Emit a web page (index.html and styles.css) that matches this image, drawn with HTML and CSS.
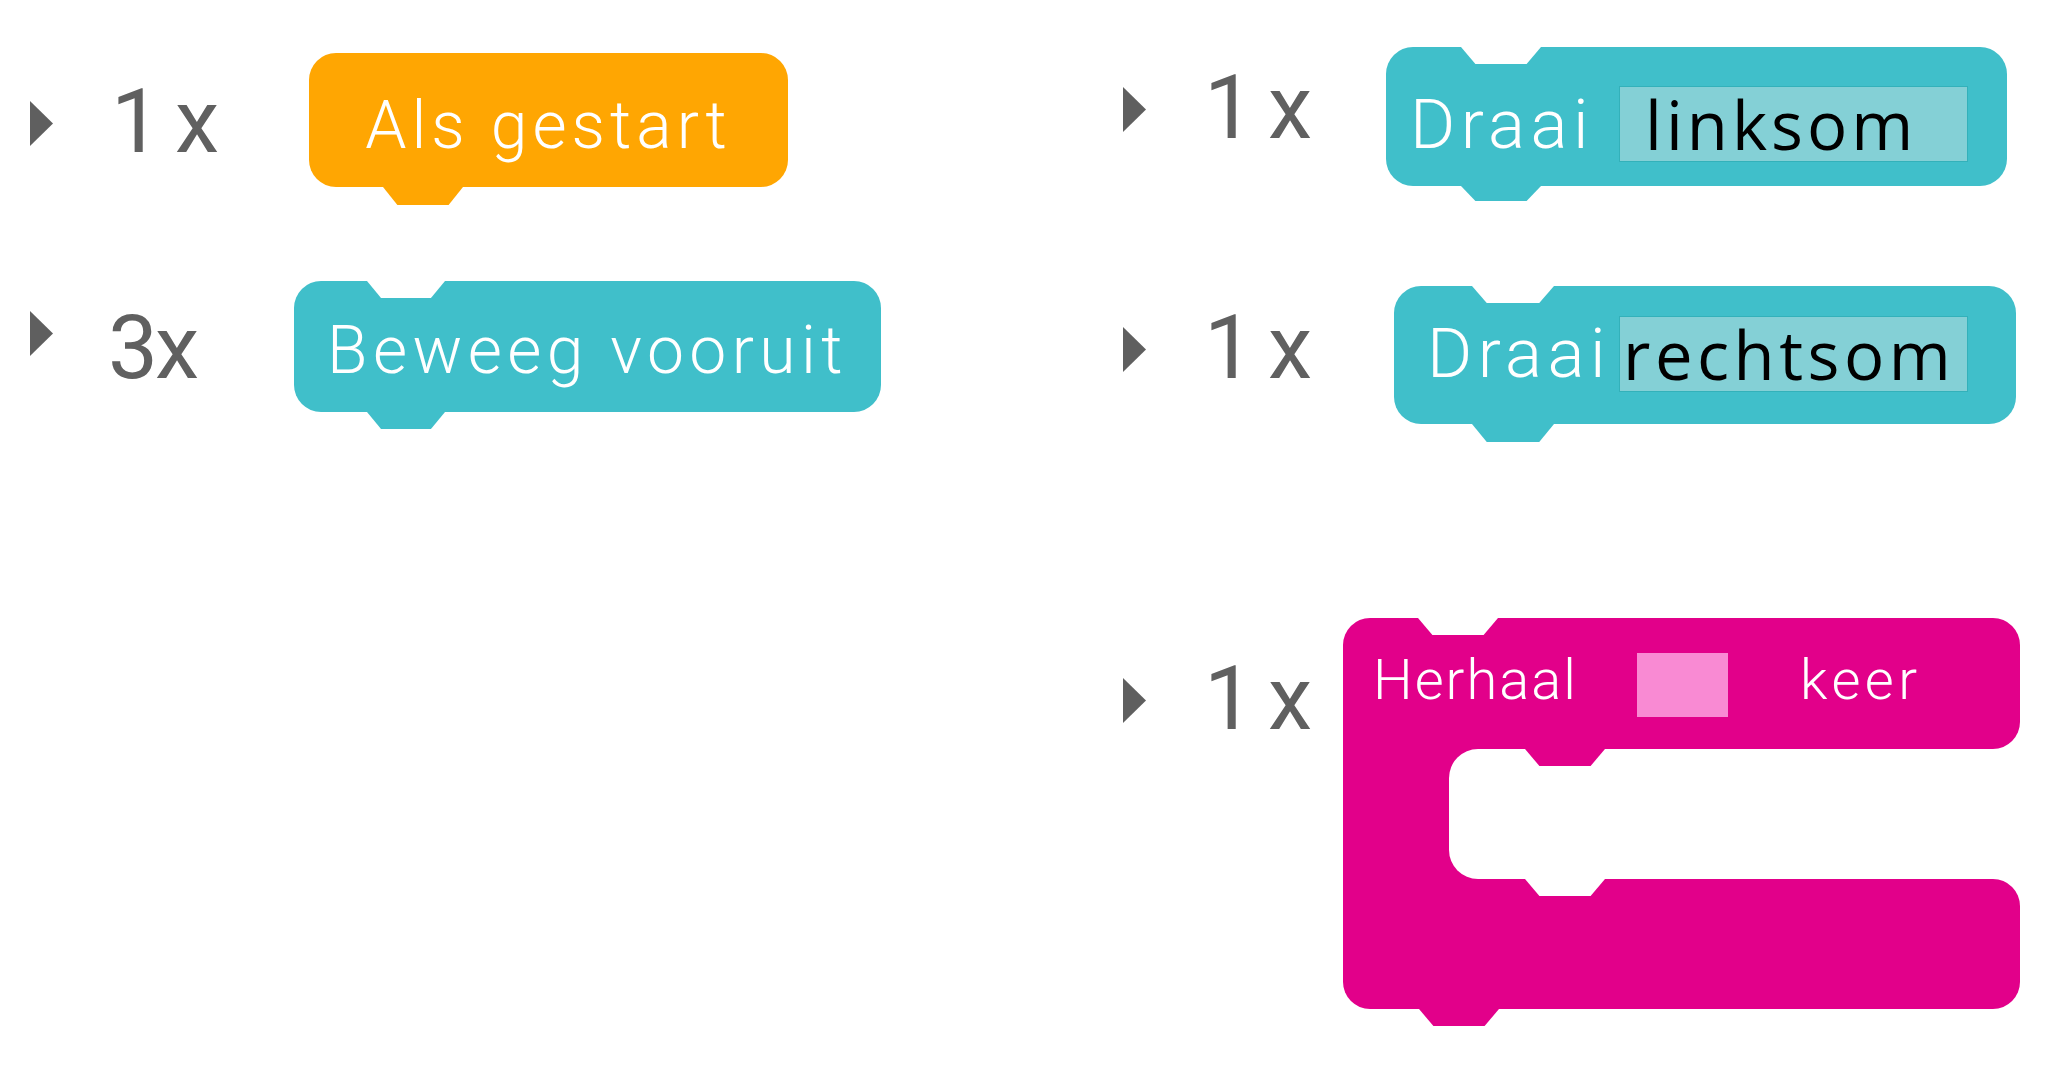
FILE: index.html
```html
<!DOCTYPE html>
<html lang="nl">
<head>
<meta charset="utf-8">
<title>Blokken</title>
<link rel="stylesheet" href="styles.css">
</head>
<body>
<div class="workspace">
  <div class="col col-left">
    <div class="row row-l1">
      <div class="lead lead-l1"><span class="tri"></span><span class="count">1 x</span></div>
      <div class="block hat orange b-start"><span class="label label-lg">Als gestart</span></div>
    </div>
    <div class="row row-l2">
      <div class="lead lead-l2"><span class="tri tri-up"></span><span class="count count-3">3x</span></div>
      <div class="block teal b-forward"><span class="label label-lg label-fwd">Beweeg vooruit</span></div>
    </div>
  </div>
  <div class="col col-right">
    <div class="row row-r1">
      <div class="lead lead-r1"><span class="tri"></span><span class="count">1 x</span></div>
      <div class="block teal turn turn-left">
        <span class="label label-turn">Draai</span>
        <span class="field field-left">linksom</span>
      </div>
    </div>
    <div class="row row-r2">
      <div class="lead lead-r2"><span class="tri"></span><span class="count">1 x</span></div>
      <div class="block teal turn turn-right">
        <span class="label label-turn">Draai</span>
        <span class="field field-right">rechtsom</span>
      </div>
    </div>
    <div class="row row-r3">
      <div class="lead lead-r3"><span class="tri"></span><span class="count">1 x</span></div>
      <div class="cblock">
        <div class="c-top">
          <span class="label c-label">Herhaal</span>
          <span class="slot"></span>
          <span class="label c-keer">keer</span>
        </div>
        <div class="c-mid"><div class="c-mouth"></div></div>
        <div class="c-bottom"></div>
      </div>
    </div>
  </div>
</div>
</body>
</html>
```
FILE: styles.css
```css
html, body {
  margin: 0;
  padding: 0;
  background: #ffffff;
}

.workspace {
  display: flex;
  height: 1076px;
  overflow: hidden;
}

.col-left {
  width: 1093px;
  padding-left: 30px;
  flex: none;
}

.col-right {
  flex: 1;
}

.row {
  display: flex;
  align-items: flex-start;
}

.row-l1 { margin-top: 53px; }
.row-l2 { margin-top: 94px; }
.row-r1 { margin-top: 47px; }
.row-r2 { margin-top: 100px; }
.row-r3 { margin-top: 194px; }

.lead {
  display: flex;
  align-items: center;
  height: 89px;
  flex: none;
}

.lead-l1 { margin-top: 24px; }
.lead-l2 { margin-top: 22px; }
.lead-r1 { margin-top: 16px; }
.lead-r2 { margin-top: 17px; }
.lead-r3 { margin-top: 36px; }

.tri {
  width: 23px;
  height: 45px;
  background: #5f5f5f;
  clip-path: polygon(0 0, 100% 50%, 0 100%);
  margin-top: 4px;
  flex: none;
}

.tri-up {
  margin-top: 0;
  margin-bottom: 28px;
}

.count {
  margin-left: 58px;
  width: 132px;
  font-family: Roboto, "Liberation Sans", sans-serif;
  font-weight: 400;
  font-size: 89px;
  line-height: 89px;
  color: #606060;
  white-space: pre;
  word-spacing: -8px;
}

.count-3 {
  margin-left: 55px;
  width: 135px;
  letter-spacing: -3px;
}

/* ---------- blocks ---------- */

.block {
  position: relative;
  display: flex;
  align-items: center;
  box-sizing: border-box;
  border-radius: 27px;
  color: #ffffff;
  flex: none;
}

.block::before,
.c-top::before,
.c-bottom::before {
  content: "";
  position: absolute;
  top: 0;
  left: 75px;
  width: 80px;
  height: 17px;
  background: #ffffff;
  clip-path: polygon(0 0, 100% 0, 82% 100%, 18% 100%);
}

.block::after,
.c-top::after,
.c-bottom::after {
  content: "";
  position: absolute;
  top: 100%;
  left: 75px;
  width: 80px;
  height: 17px;
  background: inherit;
  clip-path: polygon(0 0, 100% 0, 82% 100%, 18% 100%);
}

.hat::before { display: none; }

.orange { background: #ffa602; }
.teal { background: #40bfca; }

.label {
  font-family: Roboto, "Liberation Sans", sans-serif;
  font-weight: 300;
  line-height: 1;
  white-space: nowrap;
}

.label-lg {
  font-size: 66px;
  letter-spacing: 5px;
}

.label-fwd {
  letter-spacing: 5.4px;
}

.b-start {
  margin-left: 66px;
  width: 479px;
  height: 134px;
  justify-content: center;
  padding-top: 12px;
}

.b-start::after {
  left: 74px;
  height: 18px;
}

.b-forward {
  margin-left: 51px;
  width: 587px;
  height: 131px;
  justify-content: center;
  padding-top: 8px;
}

.b-forward::before,
.b-forward::after {
  left: 73px;
  width: 78px;
}

/* turn blocks */

.label-turn {
  font-size: 69px;
  letter-spacing: 5.5px;
}

.field {
  margin-left: auto;
  width: 349px;
  height: 76px;
  box-sizing: border-box;
  background: #84d0d6;
  border: 1px solid #33b1ba;
  color: #000000;
  font-family: "Open Sans", "Noto Sans", sans-serif;
  font-weight: 400;
  font-size: 67px;
  line-height: 74px;
  white-space: nowrap;
}

.turn-left {
  margin-left: 50px;
  width: 621px;
  height: 139px;
  padding-left: 24px;
  padding-right: 39px;
  padding-top: 15px;
}

.turn-left::after {
  height: 15px;
}

.turn-right {
  margin-left: 58px;
  width: 622px;
  height: 138px;
  padding-left: 33px;
  padding-right: 48px;
  padding-bottom: 3px;
}

.turn-right::before,
.turn-right::after {
  left: 78px;
  width: 82px;
}

.turn-right::after {
  height: 18px;
}

.field-left {
  padding-left: 25px;
  letter-spacing: 4px;
}

.field-right {
  padding-left: 3px;
  letter-spacing: 4.5px;
}

/* ---------- repeat (C) block ---------- */

.cblock {
  margin-left: 7px;
  width: 677px;
  display: flex;
  flex-direction: column;
  flex: none;
}

.c-top {
  position: relative;
  height: 131px;
  box-sizing: border-box;
  background: #e2008a;
  border-radius: 27px 27px 27px 0;
  display: flex;
  align-items: center;
  padding-left: 30px;
  color: #ffffff;
}

.c-top::after {
  left: 182px;
}

.c-label {
  width: 264px;
  font-size: 56px;
  letter-spacing: 2px;
  margin-bottom: 7px;
}

.slot {
  width: 91px;
  height: 64px;
  background: #f98ad3;
  margin-top: 3px;
  flex: none;
}

.c-keer {
  margin-left: 72px;
  font-size: 56px;
  letter-spacing: 4.5px;
  margin-bottom: 7px;
}

.c-mid {
  display: flex;
  height: 130px;
  background: #e2008a;
}

.c-mouth {
  margin-left: 106px;
  flex: 1;
  background: #ffffff;
  border-radius: 29px 0 0 29px;
}

.c-bottom {
  position: relative;
  height: 130px;
  background: #e2008a;
  border-radius: 0 27px 27px 27px;
}

.c-bottom::before {
  left: 182px;
}

.c-bottom::after {
  left: 76px;
}
```
